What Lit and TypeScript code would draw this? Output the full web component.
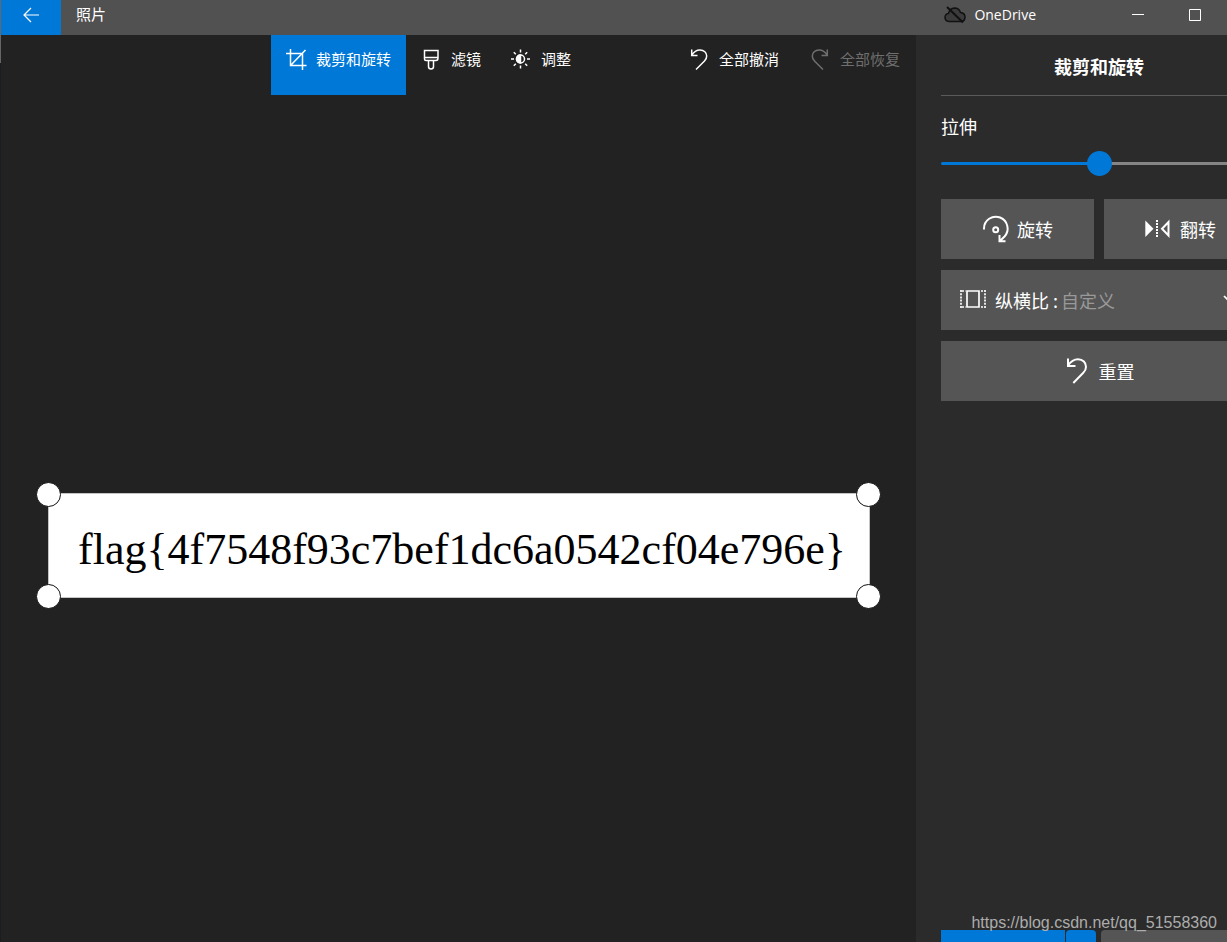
import { LitElement, html, css, svg } from "lit";
import { customElement, state } from "lit/decorators.js";
import { styleMap } from "lit/directives/style-map.js";

const icons = {
  back: svg`<path d="M1 8H16M8 1L1 8L8 15" />`,
  crop: svg`<path d="M0 4.5H16.5V21M4.5 0V16.5H20.5M5 16L19.5 1" />`,
  brush: svg`<path d="M3.5 1.5H17V9Q17 11.5 15 11.5H5Q3.5 11.5 3.5 10ZM3.5 8.5H17M7.5 11.5V17.5Q7.5 20 10 20Q12.5 20 12.5 17.5V11.5" />`,
  sun: svg`<circle cx="9.5" cy="10" r="4" /><path d="M9.5 6A4 4 0 0 0 9.5 14Z" fill="currentColor" /><path d="M9.5 0.5V3.5M9.5 16.5V19.5M0 10H3M16 10H19M2.8 3.3L4.8 5.3M14.2 14.7L16.2 16.7M2.8 16.7L4.8 14.7M14.2 5.3L16.2 3.3" />`,
  undo: svg`<path d="M2.7 0.5V6.5H8.5M2.7 6.3C5 2.5 8 1 11 1C15 1 17.7 3.7 17.7 7C17.7 9 17 10.5 15.5 12L7 20.5" />`,
  redo: svg`<path d="M17.3 0.5V6.5H11.5M17.3 6.3C15 2.5 12 1 9 1C5 1 2.3 3.7 2.3 7C2.3 9 3 10.5 4.5 12L13 20.5" />`,
  rotate: svg`<path d="M2 13.5V12.5A11.8 11.8 0 1 1 22.5 20.5L18 25M17.5 19V25.2H23.5" /><circle cx="13.7" cy="13.7" r="2.5" />`,
  flip: svg`<path d="M0.3 4.5V21L8.5 12.7Z" fill="currentColor" stroke="none" /><path d="M12 4V22" stroke-dasharray="2 1" /><path d="M23.5 6V19.5L17 12.7Z" />`,
  ratio: svg`<path d="M7 5H19V21H7Z" /><path d="M1 4V22M25 4V22" stroke-dasharray="2 1.2" /><path d="M2 5H6M2 21H6M21 5H24M21 21H24" stroke-dasharray="2 1.5" />`,
  reset: svg`<path d="M4 0.5V8H11.5M4 7.5C7 3 10 1.2 14 1.2C19 1.2 22 4.7 22 8.7C22 11 21.2 13 19.3 14.8L9.3 25" />`,
  cloud: svg`<path d="M5 16.5Q1 16 1 12.5Q1 9 4.5 8.5Q5.5 3.5 10.5 3Q15 3 16.5 7.5Q21 8 21 12Q21 16 17.5 16.5Z" fill="#3b3b3b" /><path d="M3 2L19 17.5" stroke-width="2" />`,
  chevron: svg`<path d="M1 1L7.5 7.5L14 1" />`,
};

const icon = (name: keyof typeof icons, w: number, h: number, cls = "") =>
  html`<svg class="icon ${cls}" width=${w} height=${h} viewBox="0 0 ${w} ${h}" aria-hidden="true">${icons[name]}</svg>`;

const shared = css`
  * { box-sizing: border-box; }
  button {
    border: 0;
    margin: 0;
    padding: 0;
    color: inherit;
    font: inherit;
    background: none;
    white-space: nowrap;
  }
  .icon {
    flex: none;
    display: block;
    fill: none;
    stroke: currentColor;
    stroke-width: 1.5;
    overflow: visible;
  }
`;

@customElement("title-bar")
class TitleBar extends LitElement {
  static styles = [shared, css`
    :host {
      display: flex;
      height: 35px;
      background: #525151;
      font-size: 15px;
      line-height: 20px;
    }
    .back {
      width: 60px;
      padding: 0 0 5px;
      display: grid;
      place-items: center;
      background: #0078d7;
    }
    .back .icon { stroke-width: 1.2; }
    .name { flex: 1; padding: 4px 15px; }
    .account {
      display: flex;
      align-items: center;
      gap: 8px;
      padding: 0 0 5px;
      font-family: "Open Sans", sans-serif;
      font-size: 14px;
    }
    .cloud { color: #111; }
    .window { display: flex; margin-left: 73px; padding-right: 4px; }
    .window button {
      width: 57px;
      padding: 0 0 5px;
      display: grid;
      place-items: center;
    }
    .window .icon { stroke-width: 1; }
  `];

  render() {
    return html`
      <button class="back" aria-label="返回">${icon("back", 16, 16)}</button>
      <div class="name">照片</div>
      <div class="account">${icon("cloud", 22, 20, "cloud")}<span>OneDrive</span></div>
      <div class="window">
        <button aria-label="最小化">
          <svg class="icon" width="12" height="12" viewBox="0 0 12 12"><path d="M0 5.5H12" /></svg>
        </button>
        <button aria-label="最大化">
          <svg class="icon" width="12" height="12" viewBox="0 0 12 12"><path d="M0.5 0.5H11.5V11.5H0.5Z" /></svg>
        </button>
      </div>
    `;
  }
}

@customElement("edit-toolbar")
class EditToolbar extends LitElement {
  static styles = [shared, css`
    :host {
      display: flex;
      justify-content: space-between;
      height: 60px;
      padding: 0 1px 0 270px;
      font-size: 15px;
      line-height: 20px;
    }
    .group { display: flex; }
    .history { gap: 1px; }
    button {
      display: flex;
      align-items: center;
      gap: 10px;
      padding: 0 15px 12px;
    }
    .active { background: #0078d7; }
    button:disabled { color: #6f6f6f; }
  `];

  render() {
    return html`
      <nav class="group">
        <button class="active">${icon("crop", 20, 20)}裁剪和旋转</button>
        <button>${icon("brush", 20, 20)}滤镜</button>
        <button>${icon("sun", 20, 20)}调整</button>
      </nav>
      <div class="group history">
        <button>${icon("undo", 20, 20)}全部撤消</button>
        <button disabled>${icon("redo", 20, 20)}全部恢复</button>
      </div>
    `;
  }
}

@customElement("crop-canvas")
class CropCanvas extends LitElement {
  static styles = [shared, css`
    :host {
      flex: 1;
      display: flex;
      align-items: center;
      padding: 54px 46px 0 47px;
    }
    .photo {
      position: relative;
      flex: 1;
      min-width: 0;
      padding: 27px 20px 19px 29px;
      border: 1px solid #c4c4c4;
      background: #fff;
      color: #000;
    }
    .text {
      margin: 0;
      font: 44px/57px "Liberation Serif", serif;
      white-space: nowrap;
    }
    .handle {
      position: absolute;
      width: 25px;
      height: 25px;
      border: 1px solid #111;
      border-radius: 50%;
      background: #fff;
    }
    .top { top: -12px; }
    .bottom { bottom: -12px; }
    .left { left: -13px; }
    .right { right: -12px; }
  `];

  render() {
    return html`
      <div class="photo">
        <p class="text">flag{4f7548f93c7bef1dc6a0542cf04e796e}</p>
        <button class="handle top left" aria-label="左上角"></button>
        <button class="handle top right" aria-label="右上角"></button>
        <button class="handle bottom left" aria-label="左下角"></button>
        <button class="handle bottom right" aria-label="右下角"></button>
      </div>
    `;
  }
}

@customElement("crop-panel")
class CropPanel extends LitElement {
  @state() angle = 0;

  static styles = [shared, css`
    :host {
      display: block;
      overflow: hidden;
      background: #2b2b2b;
      font-size: 18px;
      line-height: 24px;
    }
    .panel {
      display: flex;
      flex-direction: column;
      width: 366px;
      height: 100%;
      padding: 0 25px;
    }
    h2 {
      margin: 0;
      height: 61px;
      padding-top: 19px;
      border-bottom: 1px solid #5a5a5a;
      font-size: 18px;
      line-height: 24px;
      text-align: center;
    }
    .label { margin: 18px 0 13px; }
    .slider {
      appearance: none;
      display: block;
      width: 100%;
      height: 25px;
      margin: 0 0 23px;
      background: none;
    }
    .slider::-webkit-slider-runnable-track {
      height: 3px;
      border-radius: 2px;
      background: linear-gradient(#0078d7, #0078d7) 0 / var(--fill) 100% no-repeat #858585;
    }
    .slider::-webkit-slider-thumb {
      appearance: none;
      width: 25px;
      height: 25px;
      margin-top: -11px;
      border-radius: 50%;
      background: #0078d7;
    }
    .controls {
      display: grid;
      grid-template-columns: 1fr 1fr;
      gap: 11px 10px;
    }
    .box {
      display: flex;
      align-items: center;
      justify-content: center;
      gap: 9px;
      height: 60px;
      padding-bottom: 1px;
      background: #555;
    }
    .box .icon { stroke-width: 2; }
    .wide { grid-column: 1 / -1; }
    .aspect { justify-content: flex-start; padding: 0 19px 1px; }
    .aspect .icon { stroke-width: 1.7; margin-bottom: 2px; }
    .field { flex: 1; display: flex; gap: 3px; }
    select {
      appearance: none;
      flex: 1;
      border: 0;
      padding: 0;
      background: none;
      color: #999;
      font: inherit;
    }
    .footer {
      display: flex;
      gap: 1px;
      height: 12px;
      margin-top: auto;
      overflow: hidden;
    }
    .footer button { height: 40px; background: #0078d7; }
    .save { width: 124px; }
    .more { width: 30px; border-radius: 4px 4px 0 0; }
    .footer .cancel { flex: 1; margin-left: 4px; border-radius: 4px 4px 0 0; background: #555; }
  `];

  private onSlide(e: Event) {
    this.angle = Number((e.target as HTMLInputElement).value);
  }

  render() {
    const fill = ((this.angle + 45) / 90) * 100;
    return html`
      <div class="panel">
        <h2>裁剪和旋转</h2>
        <label class="label" for="straighten">拉伸</label>
        <input id="straighten" class="slider" type="range" min="-45" max="45"
          .value=${String(this.angle)} style=${styleMap({ "--fill": `${fill}%` })} @input=${this.onSlide} />
        <div class="controls">
          <button class="box">${icon("rotate", 26, 26)}旋转</button>
          <button class="box">${icon("flip", 26, 26)}翻转</button>
          <div class="box wide aspect">
            ${icon("ratio", 26, 26)}
            <div class="field">
              <label for="ratio">纵横比 :</label>
              <select id="ratio"><option>自定义</option></select>
            </div>
            ${icon("chevron", 15, 8)}
          </div>
          <button class="box wide">${icon("reset", 26, 26)}重置</button>
        </div>
        <div class="footer">
          <button class="save" aria-label="保存副本"></button>
          <button class="more" aria-label="更多保存选项"></button>
          <button class="cancel" aria-label="取消"></button>
        </div>
      </div>
    `;
  }
}

@customElement("app-root")
class AppRoot extends LitElement {
  static styles = css`
    :host {
      box-sizing: border-box;
      position: relative;
      display: flex;
      flex-direction: column;
      height: 100vh;
      overflow: hidden;
      padding-left: 1px;
      background: linear-gradient(#666 63px, #1b1d23 63px);
      color: #fff;
      font-family: "Noto Sans CJK SC", sans-serif;
    }
    .body { flex: 1; display: flex; min-height: 0; }
    main { flex: 1; min-width: 0; display: flex; flex-direction: column; background: #222; }
    crop-panel { flex: none; width: 311px; }
    .source {
      position: absolute;
      right: 10px;
      bottom: 10px;
      color: #adadad;
      font: 16px/18px "Liberation Sans", sans-serif;
    }
  `;

  render() {
    return html`
      <title-bar></title-bar>
      <div class="body">
        <main>
          <edit-toolbar></edit-toolbar>
          <crop-canvas></crop-canvas>
        </main>
        <crop-panel></crop-panel>
      </div>
      <div class="source">https://blog.csdn.net/qq_51558360</div>
    `;
  }
}
